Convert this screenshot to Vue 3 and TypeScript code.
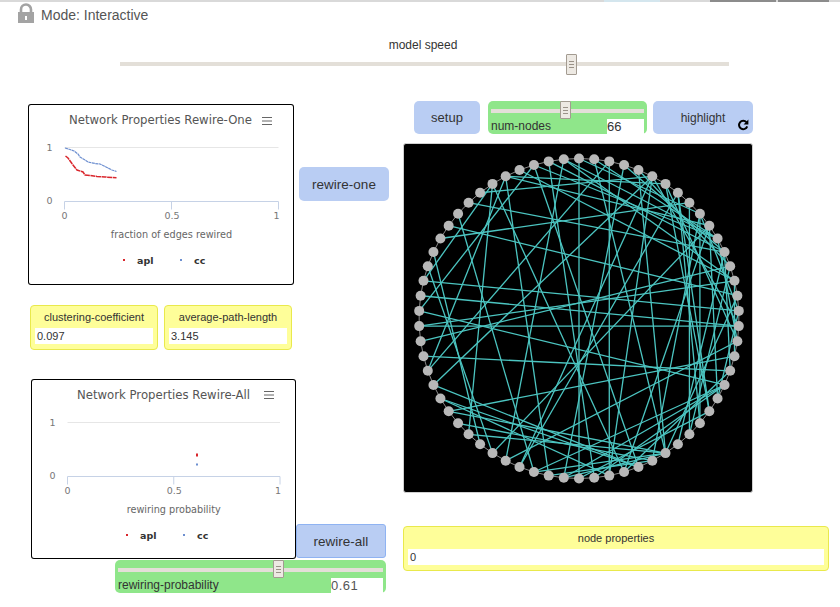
<template>
  <div class="page">
    <div class="top-strip">
      <span class="strip-tint"></span>
      <span class="strip-tab wide"></span>
      <span class="strip-tab"></span>
    </div>

    <div class="mode-bar">
      <svg class="lock" width="16" height="20" viewBox="0 0 16 20">
        <path d="M3 10V6.5a5 5 0 0 1 10 0V10" fill="none" stroke="#a3a3a3" stroke-width="2.6" />
        <rect x="0" y="9" width="16" height="11" fill="#a3a3a3" />
        <rect x="7" y="13" width="2" height="4" fill="#fff" />
      </svg>
      <span class="mode-text">Mode: Interactive</span>
    </div>

    <div class="speed">
      <div class="speed-label">model speed</div>
      <div class="speed-slider">
        <div class="track"></div>
        <div class="thumb speed-thumb" :style="{ left: '446px' }"><i></i><i></i><i></i></div>
      </div>
    </div>

    <div class="workspace">
      <div class="left-part">
        <div class="left-row">
          <div class="charts-col">
            <div v-for="plot in plots" :key="plot.title" class="plot" :class="plot.cls">
              <svg :width="plot.w" :height="plot.h" :viewBox="`${plot.x} ${plot.y} ${plot.w} ${plot.h}`">
                <text class="plot-title" :x="plot.titleX" :y="plot.titleY">{{ plot.title }}</text>
                <g stroke="#666" stroke-width="1">
                  <path v-for="n in 3" :key="n" :d="`M${plot.menuX} ${plot.menuY + (n - 1) * 3.5 + 0.5}h10`" />
                </g>
                <line :x1="plot.left" :x2="plot.right" :y1="plot.grid" :y2="plot.grid" stroke="#e6e6e6" />
                <text class="tick" :x="plot.left - 18" :y="plot.grid + 3">1</text>
                <text class="tick" :x="plot.left - 18" :y="plot.axis + 2">0</text>
                <path
                  :d="`M${plot.left} ${plot.axis + 8}V${plot.axis}H${plot.right}V${plot.axis + 8}M${(plot.left + plot.right) / 2} ${plot.axis}v8`"
                  fill="none"
                  stroke="#c6d2e6"
                />
                <text class="tick" :x="plot.left - 3" :y="plot.axis + 17">0</text>
                <text class="tick" :x="(plot.left + plot.right) / 2 - 7" :y="plot.axis + 17">0.5</text>
                <text class="tick" :x="plot.right - 5" :y="plot.axis + 17">1</text>
                <text class="axis-title" :x="(plot.left + plot.right) / 2" :y="plot.axis + 36">{{ plot.xTitle }}</text>
                <polyline v-if="plot.red" :points="plot.red" fill="none" stroke="#d9262c" stroke-width="1.5" stroke-dasharray="5 0.6" />
                <polyline v-if="plot.blue" :points="plot.blue" fill="none" stroke="#6d8fd0" stroke-width="1.2" stroke-dasharray="3 0.5" />
                <template v-if="plot.single">
                  <rect :x="plot.single" :y="plot.axis - 23" width="2" height="3" fill="#d9262c" />
                  <rect :x="plot.single" :y="plot.axis - 13" width="2" height="2" fill="#6d8fd0" />
                </template>
                <rect :x="plot.legendX" :y="plot.legendY - 5" width="2" height="2" fill="#d9262c" />
                <text class="legend" :x="plot.legendX + 14" :y="plot.legendY">apl</text>
                <rect :x="plot.legendX + 57" :y="plot.legendY - 5" width="2" height="2" fill="#6d8fd0" />
                <text class="legend" :x="plot.legendX + 71" :y="plot.legendY">cc</text>
              </svg>
            </div>

            <div class="monitors">
              <div class="monitor">
                <div class="monitor-label">clustering-coefficient</div>
                <div class="monitor-value">0.097</div>
              </div>
              <div class="monitor">
                <div class="monitor-label">average-path-length</div>
                <div class="monitor-value">3.145</div>
              </div>
            </div>
          </div>
          <div class="actions-col">
            <button class="btn rewire-one">rewire-one</button>
            <button class="btn rewire-all">rewire-all</button>
          </div>
        </div>

        <div class="slider rewiring">
          <div class="slider-track">
            <div class="track"></div>
            <div class="thumb" :style="{ left: '155px' }"><i></i><i></i><i></i></div>
          </div>
          <div class="slider-row">
            <span>rewiring-probability</span>
            <span class="slider-value wide-value">0.61</span>
          </div>
        </div>
      </div>

      <div class="right-part">
        <div class="controls">
          <button class="btn setup">setup</button>
          <div class="slider nodes">
            <div class="slider-track">
              <div class="track"></div>
              <div class="thumb" :style="{ left: '69px' }"><i></i><i></i><i></i></div>
            </div>
            <div class="slider-row">
              <span>num-nodes</span>
              <span class="slider-value">66</span>
            </div>
          </div>
          <button class="btn highlight">
            highlight
            <svg class="forever" width="12" height="12" viewBox="0 0 12 12">
              <path d="M9.4 3.2A4.2 4.2 0 1 0 10.2 7.4" fill="none" stroke="#000" stroke-width="2" />
              <path d="M11.4 0.6V5.4H6.6z" fill="#000" />
            </svg>
          </button>
        </div>

        <div class="view">
          <svg width="348" height="348" viewBox="404 144 348 348">
            <line v-for="l in ringLines" :key="l.key" :x1="l.x1" :y1="l.y1" :x2="l.x2" :y2="l.y2" stroke="#8a8a8a" />
            <line v-for="l in edgeLines" :key="l.key" :x1="l.x1" :y1="l.y1" :x2="l.x2" :y2="l.y2" stroke="#4cc5c1" stroke-width="1.3" />
            <circle v-for="(n, i) in nodes" :key="i" :cx="n.x" :cy="n.y" r="5" fill="#b8b8b8" />
          </svg>
        </div>

        <div class="monitor node-props">
          <div class="monitor-label">node properties</div>
          <div class="monitor-value">0</div>
        </div>
      </div>
    </div>
  </div>
</template>

<script setup lang="ts">
const COUNT = 66

const nodes = Array.from({ length: COUNT }, (_, i) => {
  const a = (i * 2 * Math.PI) / COUNT
  return { x: 579 + 160 * Math.sin(a), y: 318.5 - 160 * Math.cos(a) }
})

const edges: [number, number][] = [
  [0, 33], [2, 31], [8, 25], [17, 49], [20, 47], [51, 17], [52, 16], [55, 8], [59, 5], [63, 11],
  [62, 14], [60, 41], [57, 36], [54, 40], [52, 60], [50, 63], [46, 61], [46, 2], [48, 13], [50, 21],
  [45, 29], [43, 27], [42, 28], [41, 27], [44, 31], [39, 10], [37, 7], [36, 27], [35, 28], [34, 27],
  [33, 23], [30, 20], [34, 21], [31, 5], [27, 4], [28, 9], [24, 7], [23, 6], [9, 24], [10, 22],
  [6, 18], [5, 17], [3, 12], [4, 13], [1, 11], [0, 9], [65, 11], [12, 20], [14, 19], [11, 18],
  [5, 37], [3, 34], [1, 27], [56, 15], [45, 5], [49, 14], [64, 32], [61, 6], [58, 12], [53, 39],
  [65, 38], [63, 29], [43, 19], [7, 23], [9, 16], [16, 22], [30, 10], [29, 44], [61, 35], [60, 30],
  [32, 21], [26, 12], [25, 13], [15, 27], [38, 18], [36, 21], [64, 12], [65, 14], [61, 10]
]

const toLine = (a: number, b: number) => ({
  key: `${a}-${b}`,
  x1: nodes[a].x,
  y1: nodes[a].y,
  x2: nodes[b].x,
  y2: nodes[b].y
})

const ringLines = nodes.map((_, i) => toLine(i, (i + 1) % COUNT))
const edgeLines = edges.map(([a, b]) => toLine(a, b))

interface Plot {
  title: string
  xTitle: string
  cls: string
  x: number
  y: number
  w: number
  h: number
  titleX: number
  titleY: number
  menuX: number
  menuY: number
  left: number
  right: number
  grid: number
  axis: number
  legendX: number
  legendY: number
  red?: string
  blue?: string
  single?: number
}

const plots: Plot[] = [
  {
    title: 'Network Properties Rewire-One',
    xTitle: 'fraction of edges rewired',
    cls: 'plot-one',
    x: 28,
    y: 104,
    w: 266,
    h: 181,
    titleX: 69,
    titleY: 124,
    menuX: 262,
    menuY: 117,
    left: 64.5,
    right: 278.5,
    grid: 147.5,
    axis: 201.5,
    legendX: 123,
    legendY: 264,
    red: '65.5,156 68,158 73,165 77,170 83,172 85,175 90,175.5 97,176.5 105,177 116.5,177.8',
    blue: '65,148 70,149.5 74,151 78,154 80,157 85,160 88,162 95,163.5 100,164 104,166 108,168 112,170 116.5,171.5'
  },
  {
    title: 'Network Properties Rewire-All',
    xTitle: 'rewiring probability',
    cls: 'plot-all',
    x: 31,
    y: 379,
    w: 265,
    h: 180,
    titleX: 77,
    titleY: 399,
    menuX: 264,
    menuY: 391,
    left: 67.5,
    right: 280,
    grid: 422.5,
    axis: 476.5,
    legendX: 126,
    legendY: 539,
    single: 196
  }
]
</script>

<style>
html,
body {
  margin: 0;
  background: #fff;
}
</style>

<style scoped>
* {
  box-sizing: border-box;
}

.page {
  width: 840px;
  height: 607px;
  overflow: hidden;
  background: #fff;
  font-family: 'Liberation Sans', Arial, sans-serif;
  font-size: 12px;
  color: #333;
}

.top-strip {
  display: flex;
  height: 2px;
  background: #d9d9d9;
}
.strip-tint {
  width: 56px;
  margin-left: 604px;
  background: #d4e6ee;
}
.strip-tab {
  width: 51px;
  margin-left: 2px;
  background: #8c8c8c;
}
.strip-tab.wide {
  width: 66px;
  margin-left: 50px;
}

.mode-bar {
  display: flex;
  align-items: center;
  gap: 7px;
  height: 20px;
  margin-top: 1px;
  padding-left: 18px;
  font-size: 14px;
  color: #555;
}
.mode-text {
  padding-top: 4px;
}

.speed {
  width: 609px;
  margin: 15px 0 0 120px;
}
.speed-label {
  height: 16px;
  line-height: 14px;
  text-align: center;
  margin-right: 3px;
}
.speed-slider {
  position: relative;
  height: 21px;
}
.speed-slider .track {
  top: 8px;
  left: 0;
  right: 0;
}

.track {
  position: absolute;
  height: 4px;
  background: #e3dfd8;
}
.thumb {
  position: absolute;
  top: 0;
  width: 11px;
  height: 18px;
  display: flex;
  flex-direction: column;
  justify-content: center;
  align-items: center;
  gap: 2px;
  background: #ede9e3;
  border: 1px solid #a39b91;
  border-radius: 1px;
}
.thumb i {
  display: block;
  width: 5px;
  height: 1px;
  background: #9a9288;
}
.speed-thumb {
  height: 21px;
}

.workspace {
  display: flex;
  gap: 14px;
  margin-top: 26px;
  padding-left: 28px;
}
.left-part {
  width: 361px;
  flex: none;
}
.left-row {
  display: flex;
}
.charts-col {
  display: flex;
  flex-direction: column;
  width: 271px;
  flex: none;
}
.plot {
  background: #fff;
  border-radius: 3px;
  box-shadow: inset 0 0 0 1px #000;
}
.plot svg {
  display: block;
}
.plot-one {
  order: 1;
  width: 266px;
  height: 181px;
  margin-top: 3px;
}
.plot-all {
  order: 3;
  width: 265px;
  height: 180px;
  margin: 29px 0 0 3px;
}
.plot text {
  font-family: 'DejaVu Sans', sans-serif;
}
.plot-title {
  font-size: 11.7px;
  fill: #555;
}
.tick {
  font-size: 9.5px;
  fill: #777;
}
.axis-title {
  font-size: 9.7px;
  fill: #666;
  text-anchor: middle;
}
.legend {
  font-size: 9.5px;
  font-weight: 700;
  fill: #333;
}

.actions-col {
  display: flex;
  flex-direction: column;
  align-items: flex-start;
}
.btn {
  display: block;
  padding: 0;
  border: 0;
  border-radius: 5px;
  background: #b9cdf3;
  font: inherit;
  color: #333;
}
.rewire-one {
  width: 90px;
  height: 34px;
  margin-top: 66px;
  font-size: 13.5px;
}
.rewire-all {
  width: 90px;
  height: 34px;
  margin: 323px 0 0 -3px;
  border: 1px solid #8fb3f2;
  border-radius: 3px;
  font-size: 13.5px;
}

.slider {
  position: relative;
  background: #8fe68a;
  border-radius: 5px;
  padding: 0 3px;
}
.slider-track {
  position: relative;
  height: 18px;
}
.slider-track .track {
  top: 8px;
  left: 0;
  right: 0;
}
.slider-row {
  display: flex;
  justify-content: space-between;
  align-items: flex-end;
  height: 15px;
  line-height: 15px;
}
.slider-value {
  height: 15px;
  background: #fff;
  font-size: 13px;
}
.rewiring {
  width: 271px;
  height: 33px;
  margin: 1px 0 0 87px;
}
.rewiring .slider-value {
  width: 52px;
  color: #555;
}
.wide-value {
  letter-spacing: 0.5px;
}
.nodes {
  width: 159px;
  height: 33px;
}
.nodes .slider-value {
  width: 37px;
}

.right-part {
  width: 426px;
  flex: none;
}
.controls {
  display: flex;
  margin-left: 11px;
}
.setup {
  width: 66px;
  height: 33px;
  margin-right: 8px;
  font-size: 13px;
}
.highlight {
  position: relative;
  width: 100px;
  height: 33px;
  margin-left: 6px;
}
.forever {
  position: absolute;
  right: 4px;
  bottom: 3px;
}

.view {
  width: 350px;
  height: 350px;
  margin-top: 9px;
  overflow: hidden;
  background: #000;
  border: 1px solid #d0d0d0;
  border-radius: 3px;
}
.view svg {
  display: block;
}

.monitors {
  order: 2;
  display: flex;
  gap: 6px;
  margin: 20px 0 0 2px;
}
.monitor {
  width: 128px;
  height: 45px;
  padding: 0 4px;
  background: #fefe99;
  border: 1px solid #e9e94c;
  border-radius: 4px;
  font-size: 11px;
}
.monitor-label {
  height: 22px;
  line-height: 22px;
  text-align: center;
}
.monitor-value {
  height: 16px;
  padding-left: 2px;
  line-height: 16px;
  background: #fff;
}
.node-props {
  width: 426px;
  margin-top: 33px;
}
</style>
